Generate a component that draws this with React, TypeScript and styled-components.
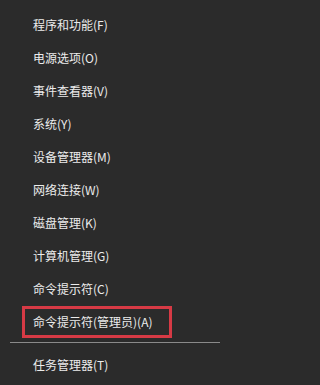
import React from 'react';
import styled, {createGlobalStyle} from 'styled-components';

type Item = {
  label: string;
  marked?: boolean;
};

const items: Item[] = [
  {label: '程序和功能(F)'},
  {label: '电源选项(O)'},
  {label: '事件查看器(V)'},
  {label: '系统(Y)'},
  {label: '设备管理器(M)'},
  {label: '网络连接(W)'},
  {label: '磁盘管理(K)'},
  {label: '计算机管理(G)'},
  {label: '命令提示符(C)'},
  {label: '命令提示符(管理员)(A)', marked: true},
];

const App = () => {
  return (
    <>
      <GlobalStyle />
      <Menu>
        {items.map((el, id) => (
          <Row key={id}>
            {el.marked ? <Marked>{el.label}</Marked> : <Label>{el.label}</Label>}
          </Row>
        ))}
        <Separator />
        <Row>
          <Label>任务管理器(T)</Label>
        </Row>
      </Menu>
    </>
  );
};

const GlobalStyle = createGlobalStyle`
  html, body {
    margin: 0;
    padding: 0;
    background: #2b2b2b;
  }
`;

const Menu = styled.div`
  width: 229px;
  height: 385px;
  box-sizing: border-box;
  padding-top: 8px;
  background: #2b2b2b;
  display: flex;
  flex-direction: column;
  font-family: 'Noto Sans CJK SC', 'Liberation Sans', sans-serif;
  overflow: hidden;
`;

const Row = styled.div`
  height: 33px;
  display: flex;
  align-items: center;
  flex-shrink: 0;
`;

const Label = styled.span`
  padding-left: 33px;
  font-size: 12px;
  line-height: 14px;
  color: #ececec;
  white-space: nowrap;
`;

const Marked = styled(Label)`
  margin-left: 22px;
  padding-left: 8px;
  width: 150px;
  height: 32px;
  box-sizing: border-box;
  display: flex;
  align-items: center;
  border: 3px solid #d63a45;
`;

const Separator = styled.div`
  margin: 4px 9px 5px 10px;
  height: 1px;
  background: #8a8a8a;
  flex-shrink: 0;
`;

export default App;
